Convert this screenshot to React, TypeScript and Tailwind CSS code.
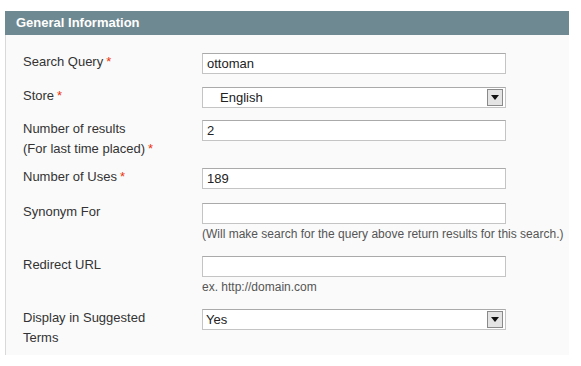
import React from "react";

const Req = () => <span className="text-[#eb340a] ml-[3px]">*</span>;

const Arrow = () => (
  <div className="absolute right-[2px] top-[1px] w-[16px] h-[17px] bg-[#e4e4e4] border border-[#8a8a8a] flex items-center justify-center">
    <svg width="8" height="5" viewBox="0 0 8 5"><path d="M0 0H8L4 5Z" fill="#111" /></svg>
  </div>
);

function Row({ label, children, h }: { label: React.ReactNode; children: React.ReactNode; h: string }) {
  return (
    <div className={`flex ${h}`}>
      <div className="w-[196px] pl-[17px] leading-[20px] text-[13px] text-[#333] -mt-[1px]">{label}</div>
      <div className="w-[304px]">{children}</div>
    </div>
  );
}

const Input = ({ value }: { value?: string }) => (
  <div className="h-[21px] w-[304px] bg-white border border-[#c4c4c4] border-t-[#aaa] text-[13px] leading-[19px] pl-[4px] text-[#222]">
    {value}
  </div>
);

const Select = ({ value, pl }: { value: string; pl: string }) => (
  <div className={`relative h-[21px] w-[304px] bg-white border border-[#c4c4c4] border-t-[#aaa] text-[13px] leading-[19px] ${pl} text-[#222]`}>
    {value}
    <Arrow />
  </div>
);

const Note = ({ children }: { children: React.ReactNode }) => (
  <div className="text-[12px] text-[#555] leading-[14px] mt-[3px] whitespace-nowrap">{children}</div>
);

export default function App() {
  return (
    <div className="w-[581px] h-[366px] bg-white pt-[11px] pl-[5px]" style={{ fontFamily: '"Liberation Sans", Arial, sans-serif' }}>
      <div className="w-[564px] h-[24px] bg-[#6f8992] text-white font-bold text-[13px] leading-[24px] pl-[11px]">
        General Information
      </div>
      <div className="w-[564px] h-[320px] bg-[#fafafa] border-l border-[#d9d9d9] pt-[18px]">
        <Row label={<>Search Query<Req /></>} h="h-[34px]"><Input value="ottoman" /></Row>
        <Row label={<>Store<Req /></>} h="h-[33px]"><Select value="English" pl="pl-[17px]" /></Row>
        <Row label={<>Number of results<br />(For last time placed)<Req /></>} h="h-[48px]"><Input value="2" /></Row>
        <Row label={<>Number of Uses<Req /></>} h="h-[35px]"><Input value="189" /></Row>
        <Row label="Synonym For" h="h-[53px]">
          <Input />
          <Note>(Will make search for the query above return results for this search.)</Note>
        </Row>
        <Row label="Redirect URL" h="h-[53px]">
          <Input />
          <Note>ex. http://domain.com</Note>
        </Row>
        <Row label={<>Display in Suggested<br />Terms</>} h="h-[46px]"><Select value="Yes" pl="pl-[3px]" /></Row>
      </div>
    </div>
  );
}
